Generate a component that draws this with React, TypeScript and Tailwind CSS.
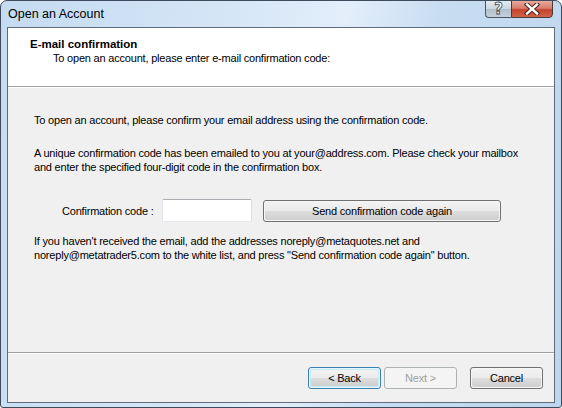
import React from "react";

const font = "font-['Liberation_Sans',Arial,sans-serif]";

function Btn({ children, variant = "normal", w = "w-[73px]" }: { children: React.ReactNode; variant?: "normal" | "default" | "disabled"; w?: string }) {
  if (variant === "disabled") {
    return (
      <div className={`${w} h-[22px] rounded-[3px] border border-[#adb2b5] bg-[#f4f4f4] flex items-center justify-center text-[11px] text-[#a0a0a0]`}>
        {children}
      </div>
    );
  }
  if (variant === "default") {
    return (
      <div className={`${w} h-[22px] rounded-[3px] border border-[#3c7fb1] p-[1px] bg-[#e6f4fc]`}>
        <div className="h-full w-full rounded-[2px] border border-[#c4ecfb] bg-[linear-gradient(to_bottom,#f2f2f2_0%,#ebebeb_50%,#dddddd_51%,#cfcfcf_100%)] flex items-center justify-center text-[11px] text-black">
          {children}
        </div>
      </div>
    );
  }
  return (
    <div className={`${w} h-[22px] rounded-[3px] border border-[#707070] p-[1px] bg-[#f6f6f6]`}>
      <div className="h-full w-full rounded-[2px] bg-[linear-gradient(to_bottom,#f2f2f2_0%,#ebebeb_50%,#dddddd_51%,#cfcfcf_100%)] flex items-center justify-center text-[11px] text-black">
        {children}
      </div>
    </div>
  );
}

function Separator() {
  return (
    <div className="flex flex-col">
      <div className="h-[1px] bg-[#a0a0a0]" />
      <div className="h-[1px] bg-white" />
    </div>
  );
}

export default function App() {
  return (
    <div className={`w-[562px] h-[408px] ${font} rounded-t-[7px] rounded-b-[3px] border border-[#3d4b5c] bg-[linear-gradient(100deg,#c5dbf1_0%,#d4e5f6_35%,#e3eefa_55%,#c8ddf2_70%,#bdd5ee_100%)] flex flex-col overflow-hidden`}>
      {/* title bar */}
      <div className="h-[26px] flex items-start justify-between pl-[7px] pr-[8px] shrink-0">
        <div className="pt-[5px] text-[12.5px] leading-[16px] text-black">Open an Account</div>
        <div className="flex -mt-[1px]">
          <div className="w-[26px] h-[18px] rounded-bl-[4px] border border-[#4a5563] border-r-0 bg-[linear-gradient(to_bottom,#e4ebf2_0%,#cdd6e0_50%,#b3bfcc_51%,#c4d0dc_100%)] flex items-center justify-center">
            <span className="text-[15px] leading-[14px] font-bold text-white [-webkit-text-stroke:0.8px_#3a4450]" style={{ fontFamily: "'DejaVu Sans', sans-serif" }}>?</span>
          </div>
          <div className="w-[42px] h-[18px] rounded-br-[4px] border border-[#4a3a3a] bg-[linear-gradient(to_bottom,#e8a99a_0%,#d77e6b_45%,#c4432b_55%,#d2644b_100%)] flex items-center justify-center">
            <svg width="18" height="12" viewBox="0 0 18 12">
              <path d="M4 1.5 L14 10.5 M14 1.5 L4 10.5" stroke="#4a2620" strokeWidth="4.4" strokeLinecap="square" />
              <path d="M4 1.5 L14 10.5 M14 1.5 L4 10.5" stroke="#ffffff" strokeWidth="2.4" strokeLinecap="square" />
            </svg>
          </div>
        </div>
      </div>
      {/* client area */}
      <div className="flex-1 mx-[6px] mb-[4px] border border-[#5d6b7a] bg-[#f0f0f0] flex flex-col text-[11px] leading-[14px] tracking-[-0.2px] text-black">
        <div className="h-[58px] bg-white pl-[22px] pt-[10px] shrink-0">
          <div className="font-bold leading-[13px] text-[11.5px] tracking-normal">E-mail confirmation</div>
          <div className="pl-[23px] leading-[14px]">To open an account, please enter e-mail confirmation code:</div>
        </div>
        <Separator />
        <div className="flex-1 pl-[26px] pr-[12px] pt-[25px] flex flex-col">
          <p>To open an account, please confirm your email address using the confirmation code.</p>
          <p className="mt-[19px]">
            A unique confirmation code has been emailed to you at your@address.com. Please check your mailbox
            <br />
            and enter the specified four-digit code in the confirmation box.
          </p>
          <div className="mt-[25px] flex items-center">
            <span className="ml-[28px] w-[100px] whitespace-nowrap">Confirmation code :</span>
            <div className="w-[90px] h-[23px] rounded-[2px] border border-[#abadb3] border-b-[#e3e9ef] border-l-[#e2e3ea] border-r-[#dbdfe6] bg-white" />
            <div className="ml-[11px]">
              <Btn w="w-[238px]">Send confirmation code again</Btn>
            </div>
          </div>
          <p className="mt-[12px]">
            If you haven't received the email, add the addresses noreply@metaquotes.net and
            <br />
            noreply@metatrader5.com to the white list, and press "Send confirmation code again" button.
          </p>
        </div>
        <Separator />
        <div className="h-[48px] flex items-start justify-end pt-[13px] pr-[11px] shrink-0">
          <Btn variant="default">&lt; Back</Btn>
          <div className="ml-[3px]">
            <Btn variant="disabled">Next &gt;</Btn>
          </div>
          <div className="ml-[13px]">
            <Btn>Cancel</Btn>
          </div>
        </div>
      </div>
    </div>
  );
}
